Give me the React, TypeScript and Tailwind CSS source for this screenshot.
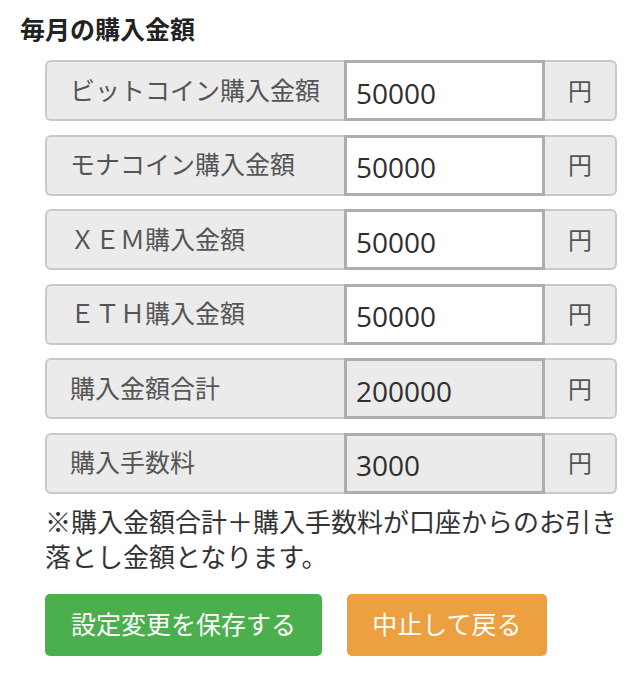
import type { ReactNode } from 'react'

const font = { fontFamily: '"Open Sans", "Noto Sans CJK JP", sans-serif' }

interface RowProps {
  label: ReactNode
  value: string
  readOnly?: boolean
}

function AmountRow({ label, value, readOnly = false }: RowProps) {
  return (
    <div className="flex h-[61px]">
      <div className="flex flex-1 items-center rounded-l-md border-2 border-r-0 border-[#c9c9c9] bg-[#ebebeb] pl-[23px] text-[25px] text-[#555]">
        {label}
      </div>
      <input
        readOnly={readOnly}
        defaultValue={value}
        className={`w-[201px] border-[3px] border-[#adadad] pl-[9px] pt-[4px] text-[28px] text-[#2e2e2e] outline-none ${
          readOnly ? 'bg-[#ebebeb]' : 'bg-white'
        }`}
        style={font}
      />
      <div className="flex w-[72px] items-center justify-center rounded-r-md border-2 border-l-0 border-[#c9c9c9] bg-[#ebebeb] text-[24px] text-[#555]">
        円
      </div>
    </div>
  )
}

export default function App() {
  return (
    <div className="min-h-screen bg-white pl-[20px] pr-[20px] pt-[11px]" style={font}>
      <h2 className="text-[25px] font-bold leading-[37px] text-[#222]">毎月の購入金額</h2>

      <div className="ml-[25px] mt-[12px] mr-[2px] flex flex-col gap-[13.5px]">
        <AmountRow label="ビットコイン購入金額" value="50000" />
        <AmountRow label="モナコイン購入金額" value="50000" />
        <AmountRow label="ＸＥＭ購入金額" value="50000" />
        <AmountRow label="ＥＴＨ購入金額" value="50000" />
        <AmountRow label="購入金額合計" value="200000" readOnly />
        <AmountRow label="購入手数料" value="3000" readOnly />
      </div>

      <div className="ml-[25px] mt-[11px]">
        <p className="text-[26px] leading-[35px] text-[#333]">
          ※購入金額合計＋購入手数料が口座からのお引き落とし金額となります。
        </p>

        <div className="mt-[19px] flex gap-[25px]">
          <button className="h-[62px] w-[277px] rounded-[5px] bg-[#4caf4d] text-[25px] text-white">
            設定変更を保存する
          </button>
          <button className="h-[62px] w-[200px] rounded-[5px] bg-[#eca03f] text-[25px] text-white">
            中止して戻る
          </button>
        </div>
      </div>
    </div>
  )
}
